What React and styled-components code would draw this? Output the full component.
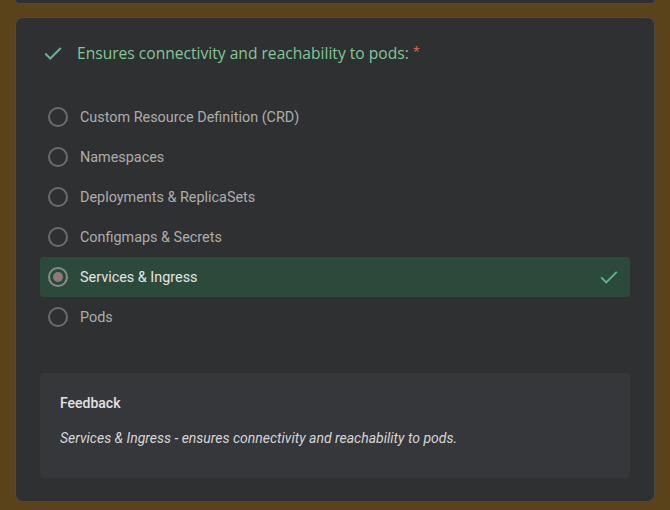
import React from 'react';
import styled, { createGlobalStyle } from 'styled-components';

const GlobalStyle = createGlobalStyle`
  html, body {
    margin: 0;
    padding: 0;
    background: #5a431b;
  }
  body {
    font-family: Roboto, "Liberation Sans", sans-serif;
  }
`;

const Page = styled.div`
  display: flex;
  flex-direction: column;
  gap: 13px;
  padding: 0 15px;
  width: 640px;
`;

const CardStub = styled.div`
  height: 3px;
  background: #2f3031;
  border: 1px solid #4a4a48;
  border-top: none;
  border-radius: 0 0 8px 8px;
`;

const Card = styled.section`
  background: #2f3031;
  border: 1px solid #4a4a48;
  border-radius: 8px;
  padding: 23px 24px 23px;
  display: flex;
  flex-direction: column;
`;

const Title = styled.div`
  display: flex;
  align-items: center;
  gap: 13px;
  padding-left: 2px;
  height: 24px;
  font-family: "Open Sans", Roboto, sans-serif;
  font-size: 15.6px;
  color: #81c995;
`;

const Required = styled.span`
  color: #e06955;
  margin-left: 4px;
  font-size: 13px;
  vertical-align: top;
`;

const Options = styled.div`
  display: flex;
  flex-direction: column;
  margin-top: 32px;
`;

const Row = styled.div`
  display: flex;
  align-items: center;
  gap: 12px;
  height: 40px;
  padding: 0 10px 0 8px;
  border-radius: 4px;
  background: ${p => (p.$selected ? '#2c4a3b' : 'transparent')};
  color: ${p => (p.$selected ? '#e4e4e4' : '#adadad')};
  font-size: 14.4px;
`;

const Radio = styled.span`
  box-sizing: border-box;
  width: 20px;
  height: 20px;
  border-radius: 50%;
  border: 2px solid ${p => (p.$checked ? '#8b8b8b' : '#6c6c6c')};
  display: flex;
  align-items: center;
  justify-content: center;
  flex-shrink: 0;

  &::after {
    content: '';
    display: ${p => (p.$checked ? 'block' : 'none')};
    width: 10px;
    height: 10px;
    border-radius: 50%;
    background: #8c7a78;
  }
`;

const Label = styled.span`
  flex: 1;
`;

const Feedback = styled.div`
  margin-top: 36px;
  background: #35373a;
  border-radius: 4px;
  padding: 22px 20px 32px;
  display: flex;
  flex-direction: column;
  gap: 19px;
`;

const FeedbackTitle = styled.div`
  font-size: 14px;
  font-weight: 500;
  color: #e2e2e2;
`;

const FeedbackText = styled.div`
  font-size: 14px;
  font-style: italic;
  color: #d6d6d6;
`;

const Check = ({ size = 18, color = '#5bb98b', width = 2 }) => (
  <svg width={size} height={size} viewBox="0 0 24 24" fill="none">
    <path d="M3.5 12.5l5.5 5.5L20.5 6.5" stroke={color} strokeWidth={width} />
  </svg>
);

const options = [
  'Custom Resource Definition (CRD)',
  'Namespaces',
  'Deployments & ReplicaSets',
  'Configmaps & Secrets',
  'Services & Ingress',
  'Pods',
];

const selected = 'Services & Ingress';

export default function App() {
  return (
    <>
      <GlobalStyle />
      <Page>
        <CardStub />
        <Card>
          <Title>
            <Check size={22} width={2.2} />
            <span>
              Ensures connectivity and reachability to pods:
              <Required>*</Required>
            </span>
          </Title>
          <Options>
            {options.map(o => (
              <Row key={o} $selected={o === selected}>
                <Radio $checked={o === selected} />
                <Label>{o}</Label>
                {o === selected && <Check size={22} />}
              </Row>
            ))}
          </Options>
          <Feedback>
            <FeedbackTitle>Feedback</FeedbackTitle>
            <FeedbackText>
              Services &amp; Ingress - ensures connectivity and reachability to pods.
            </FeedbackText>
          </Feedback>
        </Card>
      </Page>
    </>
  );
}
